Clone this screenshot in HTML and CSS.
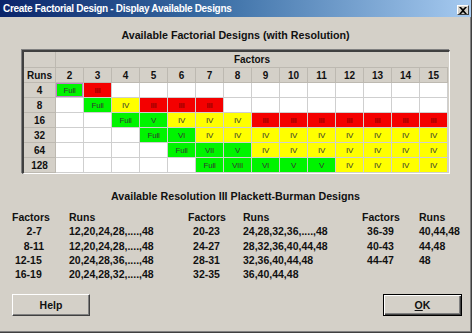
FILE: index.html
```html
<!DOCTYPE html>
<html>
<head>
<meta charset="utf-8">
<link rel="stylesheet" href="styles.css">
</head>
<body>
<div class="window">
  <div class="titlebar">
    <span class="title">Create Factorial Design - Display Available Designs</span>
    <span class="close"><svg width="8" height="7" viewBox="0 0 8 7"><path d="M0 0h2l2 2 2-2h2L5 3.5 8 7H6L4 5 2 7H0l3-3.5z" fill="#000"/></svg></span>
  </div>
  <div class="content">
    <div class="heading h1">Available Factorial Designs (with Resolution)</div>
    <div class="grid">
      <div class="hc corner"></div>
      <div class="hc factors">Factors</div>
      <div class="hc rh">Runs</div>
      <div class="hc">2</div><div class="hc">3</div><div class="hc">4</div><div class="hc">5</div><div class="hc">6</div><div class="hc">7</div><div class="hc">8</div><div class="hc">9</div><div class="hc">10</div><div class="hc">11</div><div class="hc">12</div><div class="hc">13</div><div class="hc">14</div><div class="hc">15</div>

      <div class="hc rh">4</div>
      <div class="c g sel">Full</div><div class="c r">III</div><div class="c"></div><div class="c"></div><div class="c"></div><div class="c"></div><div class="c"></div><div class="c"></div><div class="c"></div><div class="c"></div><div class="c"></div><div class="c"></div><div class="c"></div><div class="c"></div>

      <div class="hc rh">8</div>
      <div class="c"></div><div class="c g">Full</div><div class="c y">IV</div><div class="c r">III</div><div class="c r">III</div><div class="c r">III</div><div class="c"></div><div class="c"></div><div class="c"></div><div class="c"></div><div class="c"></div><div class="c"></div><div class="c"></div><div class="c"></div>

      <div class="hc rh">16</div>
      <div class="c"></div><div class="c"></div><div class="c g">Full</div><div class="c g">V</div><div class="c y">IV</div><div class="c y">IV</div><div class="c y">IV</div><div class="c r">III</div><div class="c r">III</div><div class="c r">III</div><div class="c r">III</div><div class="c r">III</div><div class="c r">III</div><div class="c r">III</div>

      <div class="hc rh">32</div>
      <div class="c"></div><div class="c"></div><div class="c"></div><div class="c g">Full</div><div class="c g">VI</div><div class="c y">IV</div><div class="c y">IV</div><div class="c y">IV</div><div class="c y">IV</div><div class="c y">IV</div><div class="c y">IV</div><div class="c y">IV</div><div class="c y">IV</div><div class="c y">IV</div>

      <div class="hc rh">64</div>
      <div class="c"></div><div class="c"></div><div class="c"></div><div class="c"></div><div class="c g">Full</div><div class="c g">VII</div><div class="c g">V</div><div class="c y">IV</div><div class="c y">IV</div><div class="c y">IV</div><div class="c y">IV</div><div class="c y">IV</div><div class="c y">IV</div><div class="c y">IV</div>

      <div class="hc rh">128</div>
      <div class="c"></div><div class="c"></div><div class="c"></div><div class="c"></div><div class="c"></div><div class="c g">Full</div><div class="c g">VIII</div><div class="c g">VI</div><div class="c g">V</div><div class="c g">V</div><div class="c y">IV</div><div class="c y">IV</div><div class="c y">IV</div><div class="c y">IV</div>
    </div>

    <div class="heading h2">Available Resolution III Plackett-Burman Designs</div>
    <div class="pb">
      <span class="f">Factors</span><span class="rn">Runs</span><span class="f">Factors</span><span class="rn">Runs</span><span class="f">Factors</span><span class="rn">Runs</span>
      <span class="f1">     2-7</span><span class="rn">12,20,24,28,....,48</span><span class="f">20-23</span><span class="rn">24,28,32,36,....,48</span><span class="f">36-39</span><span class="rn">40,44,48</span>
      <span class="f1">    8-11</span><span class="rn">12,20,24,28,....,48</span><span class="f">24-27</span><span class="rn">28,32,36,40,44,48</span><span class="f">40-43</span><span class="rn">44,48</span>
      <span class="f1"> 12-15</span><span class="rn">20,24,28,36,....,48</span><span class="f">28-31</span><span class="rn">32,36,40,44,48</span><span class="f">44-47</span><span class="rn">48</span>
      <span class="f1"> 16-19</span><span class="rn">20,24,28,32,....,48</span><span class="f">32-35</span><span class="rn">36,40,44,48</span><span class="f"></span><span class="rn"></span>
    </div>

    <div class="buttons">
      <button class="btn">Help</button>
      <button class="btn default"><u>O</u>K</button>
    </div>
  </div>
</div>
</body>
</html>
```

FILE: styles.css
```css
html, body {
  margin: 0;
  padding: 0;
  background: #ffffff;
}
body {
  font-family: "Liberation Sans", Arial, sans-serif;
  color: #000;
}
.window {
  width: 472px;
  height: 333px;
  box-sizing: border-box;
  background: #d4d0c8;
  border-right: 1px solid #404040;
  border-bottom: 1px solid #404040;
  box-shadow: inset -1px -1px 0 #808080;
  display: flex;
  flex-direction: column;
}
.titlebar {
  height: 17px;
  flex: none;
  background: linear-gradient(to right, #0a246a 0%, #3a6ea5 45%, #a6caf0 100%);
  display: flex;
  align-items: center;
  justify-content: space-between;
  padding: 0 2px 0 3px;
}
.title {
  color: #fff;
  font-weight: bold;
  font-size: 10px;
  letter-spacing: -0.3px;
  white-space: nowrap;
}
.close {
  width: 12px;
  height: 10px;
  margin-top: 3px;
  box-sizing: border-box;
  background: #d4d0c8;
  border-top: 1px solid #fff;
  border-left: 1px solid #fff;
  border-right: 1px solid #404040;
  border-bottom: 1px solid #404040;
  display: flex;
  align-items: center;
  justify-content: center;
}
.close svg { display: block; }
.content {
  flex: 1;
  display: flex;
  flex-direction: column;
}
.heading {
  font-weight: bold;
  font-size: 10.7px;
  line-height: 14px;
  text-align: center;
  color: #111;
}
.h1 {
  margin-top: 11px;
}
.grid {
  margin: 8px 0 0 22px;
  width: 428px;
  box-sizing: border-box;
  display: grid;
  grid-template-columns: 32px repeat(14, 28px);
  grid-template-rows: 16px repeat(7, 15px);
  border-top: 2px solid #404040;
  border-left: 2px solid #404040;
  border-right: 1px solid #ffffff;
  border-bottom: 1px solid #ffffff;
  box-shadow: -1px -1px 0 #808080;
  font-size: 10px;
}
.hc {
  background: #d4d0c8;
  border-right: 1px solid #bdb9b1;
  border-bottom: 1px solid #bdb9b1;
  box-sizing: border-box;
  display: flex;
  align-items: center;
  justify-content: center;
  font-weight: bold;
  font-size: 10px;
  color: #111;
}
.factors {
  grid-column: 2 / span 14;
  border-right: none;
}
.c {
  background: #ffffff;
  border-right: 1px solid #cfcfcf;
  border-bottom: 1px solid #cfcfcf;
  box-sizing: border-box;
  display: flex;
  align-items: center;
  justify-content: center;
  font-size: 8px;
  letter-spacing: -0.2px;
  color: #333;
}
.g { background: #00f400; }
.r { background: #f40000; color: #6a0000; }
.y { background: #ffff00; }
.sel { box-shadow: inset 0 0 0 1px #c080c8; }
.h2 {
  margin-top: 15px;
}
.pb {
  margin: 7px 0 0 12px;
  display: grid;
  grid-template-columns: 57px 119px 55px 119px 57px 1fr;
  grid-auto-rows: 14.25px;
  font-weight: bold;
  font-size: 10.5px;
  line-height: 14.25px;
  color: #111;
}
.pb .f {
  width: 37px;
  text-align: center;
}
.pb .f1 {
  white-space: pre;
}
.buttons {
  margin-top: 13px;
  padding: 0 9px 0 12px;
  display: flex;
  justify-content: space-between;
}
.btn {
  width: 78px;
  height: 22px;
  background: #d4d0c8;
  font-family: "Liberation Sans", Arial, sans-serif;
  font-weight: bold;
  font-size: 10.5px;
  color: #111;
  padding: 0;
  border-top: 1px solid #ffffff;
  border-left: 1px solid #ffffff;
  border-right: 1px solid #404040;
  border-bottom: 1px solid #404040;
  box-shadow: inset -1px -1px 0 #808080;
}
.default {
  width: 79px;
  border: 1px solid #000;
  box-shadow: inset 1px 1px 0 #ffffff, inset -1px -1px 0 #404040, inset -2px -2px 0 #808080;
}
```
